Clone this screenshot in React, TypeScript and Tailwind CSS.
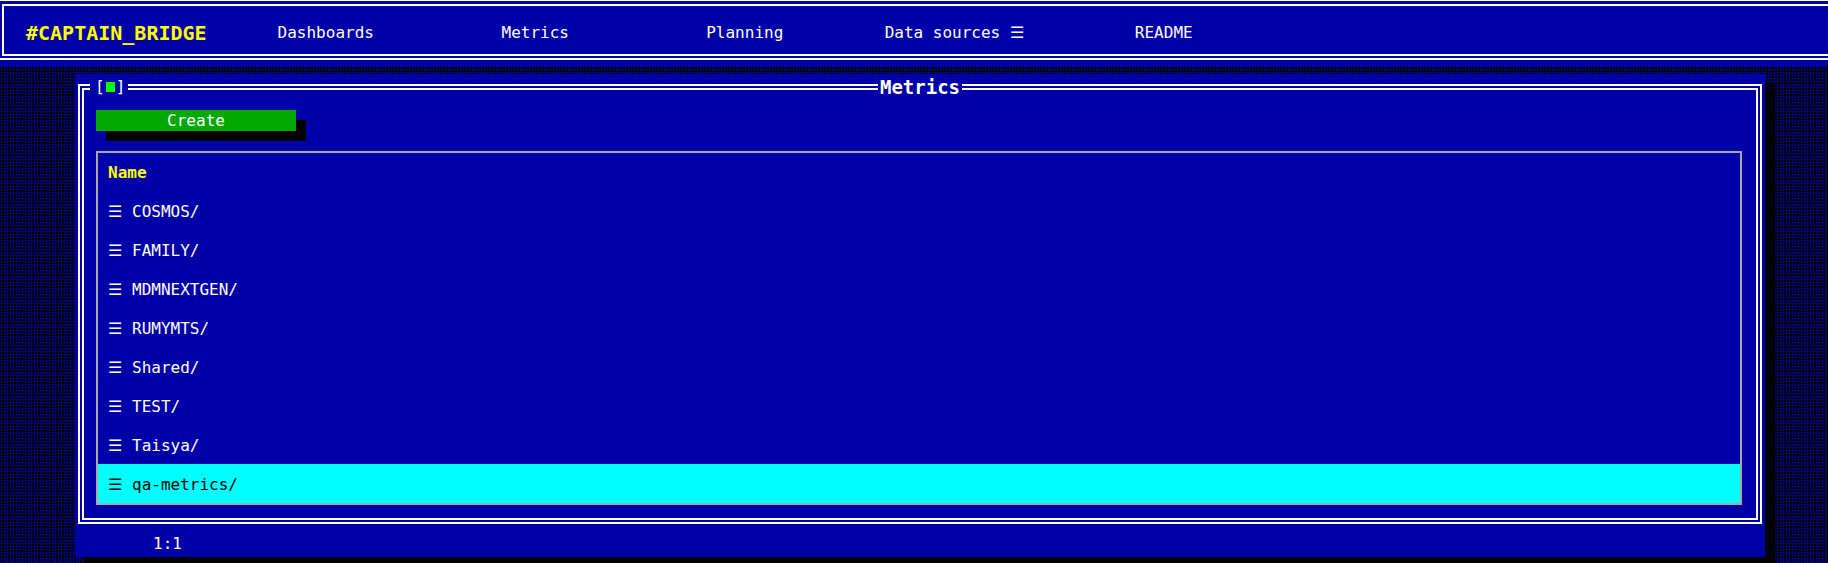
import React from 'react';

const NAV_ITEMS = ['Dashboards', 'Metrics', 'Planning', 'Data sources ☰', 'README'];

const FOLDERS = ['COSMOS/', 'FAMILY/', 'MDMNEXTGEN/', 'RUMYMTS/', 'Shared/', 'TEST/', 'Taisya/', 'qa-metrics/'];
const SELECTED = 'qa-metrics/';

const App: React.FC = () => {
  return (
    <div className="min-h-screen bg-black bg-[image:conic-gradient(#0000a8_25%,#000_0)] bg-[length:3px_3px] font-['DejaVu_Sans_Mono','Liberation_Mono',monospace] text-white">
      {/* Top navigation */}
      <nav className="bg-[#0000a8] border-t border-white pb-[6px]">
        <div className="pt-[3px] pl-[2px] pb-[2px] border-b-2 border-white">
          <div className="h-[52px] border-2 border-r-0 border-white flex items-center pl-[22px] pt-[6px]">
            <div className="w-[195px] text-[20px] font-bold text-[#ffff00] leading-none">#CAPTAIN_BRIDGE</div>
            {NAV_ITEMS.map((item) => (
              <div key={item} className="w-[209.5px] text-center text-[16px] leading-none">
                {item}
              </div>
            ))}
          </div>
        </div>
      </nav>

      {/* Metrics window */}
      <div className="pt-[8px] pl-[75px]">
        <div className="w-[1690px] bg-[#0000a8] shadow-[10px_10px_0_#000] pt-[10px] px-[3px]">
          <div className="relative h-[440px] border-[6px] border-double border-white pt-[20px] pl-[12px] pr-[14px]">
            <div className="absolute left-[6px] top-[-3px] -translate-y-1/2 bg-[#0000a8] pl-[5px] pr-[3px] flex items-center text-[16px] leading-none">
              <span>[</span>
              <span className="inline-block w-[9px] h-[10px] bg-[#00ff00] mx-px" />
              <span>]</span>
            </div>
            <div className="absolute left-1/2 top-[-3px] -translate-x-1/2 -translate-y-1/2 bg-[#0000a8] px-[2px] text-[19px] font-bold leading-none">
              Metrics
            </div>

            <button className="block w-[200px] h-[21px] bg-[#00a800] shadow-[10px_10px_0_#000] text-[16px] leading-none text-white">
              Create
            </button>

            <div className="mt-[20px] border-2 border-[#a8a8a8]">
              <div className="h-[38px] flex items-center pl-[10px] pt-[2px] text-[16px] font-bold text-[#ffff00]">Name</div>
              {FOLDERS.map((name) => {
                const active = name === SELECTED;
                return (
                  <div
                    key={name}
                    className={
                      active
                        ? 'h-[39px] flex items-center pl-[10px] pt-[2px] text-[16px] bg-[#00ffff] text-black'
                        : 'h-[39px] flex items-center pl-[10px] pt-[2px] text-[16px] text-white'
                    }
                  >
                    <span className="mr-[10px]">☰</span>
                    <span>{name}</span>
                  </div>
                );
              })}
            </div>
          </div>

          {/* Status bar */}
          <div className="h-[33px] flex items-center pl-[75px] pt-[6px] text-[16px]">1:1</div>
        </div>
      </div>
    </div>
  );
};

export default App;
